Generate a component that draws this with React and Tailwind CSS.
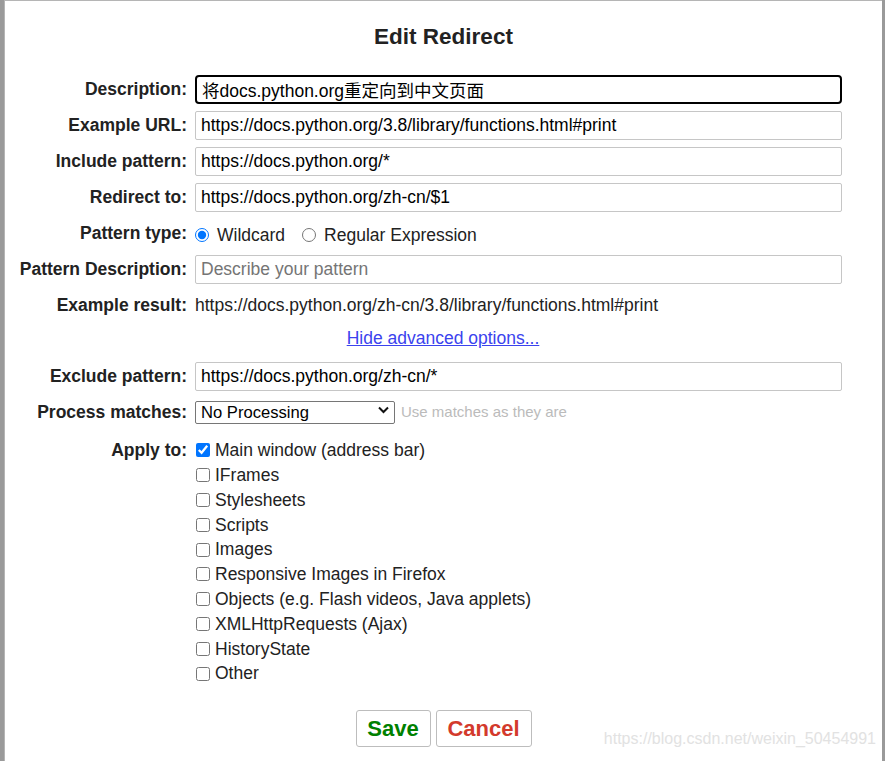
import { useState } from "react";

const fields = [
  { label: "Description:", value: "将docs.python.org重定向到中文页面", focus: true },
  { label: "Example URL:", value: "https://docs.python.org/3.8/library/functions.html#print" },
  { label: "Include pattern:", value: "https://docs.python.org/*" },
  { label: "Redirect to:", value: "https://docs.python.org/zh-cn/$1" },
];

const applyTo = [
  "Main window (address bar)",
  "IFrames",
  "Stylesheets",
  "Scripts",
  "Images",
  "Responsive Images in Firefox",
  "Objects (e.g. Flash videos, Java applets)",
  "XMLHttpRequests (Ajax)",
  "HistoryState",
  "Other",
];

const Label = ({ children }) => (
  <div className="text-right font-bold text-[#222]">{children}</div>
);

const TextInput = ({ value, placeholder, focus }) => (
  <input
    defaultValue={value}
    placeholder={placeholder}
    className={
      "h-[29px] w-full px-[5px] text-black placeholder:text-[#757575] outline-none " +
      (focus
        ? "border-2 border-black rounded-[4px] px-[4px]"
        : "border border-[#c6c6c6] rounded-[2px]")
    }
  />
);

const App = () => {
  const [type, setType] = useState("wildcard");
  const [checked, setChecked] = useState([true, false, false, false, false, false, false, false, false, false]);

  return (
    <div
      className="flex h-[761px] w-[885px] bg-[#9a9a9a] text-[17.5px] text-[#222]"
      style={{ fontFamily: '"Liberation Sans", Arial, "Noto Sans CJK SC", sans-serif' }}
    >
      <div className="relative ml-[4px] mr-[3px] flex-1 border-l border-t border-[#b5b5b5] bg-white">
        <h1 className="pt-[21px] text-center text-[22.5px] font-bold leading-[30px] text-[#222]">
          Edit Redirect
        </h1>

        <div className="mt-[19px] grid grid-cols-[182px_647px] gap-x-2">
          {fields.map((f) => (
            <div key={f.label} className="col-span-2 grid h-[36px] grid-cols-subgrid items-center">
              <Label>{f.label}</Label>
              <TextInput value={f.value} focus={f.focus} />
            </div>
          ))}

          <div className="col-span-2 grid h-[36px] grid-cols-subgrid items-center">
            <Label>Pattern type:</Label>
            <div className="flex items-center pt-[4px]">
              <input
                type="radio"
                checked={type === "wildcard"}
                onChange={() => setType("wildcard")}
                className="h-[14px] w-[14px] accent-[#0075ff]"
              />
              <span className="ml-[8px]">Wildcard</span>
              <input
                type="radio"
                checked={type === "regex"}
                onChange={() => setType("regex")}
                className="ml-[17px] h-[14px] w-[14px] accent-[#0075ff]"
              />
              <span className="ml-[8px]">Regular Expression</span>
            </div>
          </div>

          <div className="col-span-2 grid h-[36px] grid-cols-subgrid items-center">
            <Label>Pattern Description:</Label>
            <TextInput placeholder="Describe your pattern" />
          </div>

          <div className="col-span-2 grid h-[36px] grid-cols-subgrid items-center">
            <Label>Example result:</Label>
            <div>https://docs.python.org/zh-cn/3.8/library/functions.html#print</div>
          </div>

          <div className="col-span-2 flex h-[30px] items-center justify-center pl-[39px]">
            <a href="#" className="text-[#3b43ee] underline">
              Hide advanced options...
            </a>
          </div>

          <div className="col-span-2 mt-[5px] grid h-[36px] grid-cols-subgrid items-center">
            <Label>Exclude pattern:</Label>
            <TextInput value="https://docs.python.org/zh-cn/*" />
          </div>

          <div className="col-span-2 grid h-[36px] grid-cols-subgrid items-center">
            <Label>Process matches:</Label>
            <div className="flex items-center">
              <div className="relative">
                <select className="h-[23px] w-[200px] appearance-none rounded-[2px] border border-[#767676] bg-white pl-[5px] text-[16.6px] leading-[20px] text-black">
                  <option>No Processing</option>
                  <option>URL decode</option>
                  <option>URL encode</option>
                  <option>Base64 decode</option>
                </select>
                <svg
                  className="pointer-events-none absolute right-[6px] top-[7px]"
                  width="11"
                  height="8"
                  viewBox="0 0 11 8"
                >
                  <path d="M1 1.5 L5.5 6 L10 1.5" fill="none" stroke="#111" strokeWidth="2" />
                </svg>
              </div>
              <span className="ml-[6px] text-[15px] text-[#bbb]">Use matches as they are</span>
            </div>
          </div>

          <div className="col-span-2 mt-[8px] grid grid-cols-subgrid">
            <div className="flex h-[25px] items-center justify-end font-bold">Apply to:</div>
            <div className="flex flex-col">
              {applyTo.map((t, i) => (
                <label key={t} className="flex h-[24.8px] items-center">
                  <input
                    type="checkbox"
                    checked={checked[i]}
                    onChange={() => setChecked(checked.map((c, j) => (j === i ? !c : c)))}
                    className="ml-[1px] h-[14px] w-[14px] accent-[#0075ff]"
                  />
                  <span className="ml-[5px]">{t}</span>
                </label>
              ))}
            </div>
          </div>
        </div>

        <div className="mt-[24px] flex justify-center gap-[5px]">
          <button className="h-[37px] w-[75px] rounded-[3px] border border-[#bdbdbd] text-[22px] font-bold text-[#008000]">
            Save
          </button>
          <button className="h-[37px] w-[96px] rounded-[3px] border border-[#bdbdbd] text-[22px] font-bold text-[#d33a2c]">
            Cancel
          </button>
        </div>

        <div className="absolute bottom-[10px] right-[6px] text-[16px] text-[#e2e2e2]">
          https://blog.csdn.net/weixin_50454991
        </div>
      </div>
    </div>
  );
};

export default App;
